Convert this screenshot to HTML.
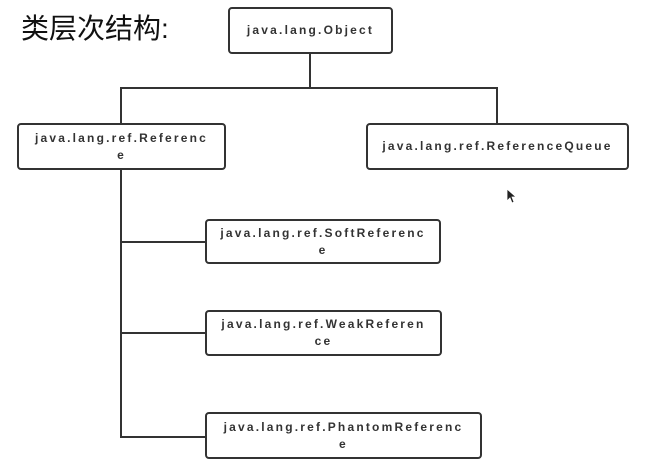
<!DOCTYPE html>
<html><head><meta charset="utf-8"><style>
html,body{margin:0;padding:0;background:#fff;}
body{width:656px;height:473px;position:relative;overflow:hidden;}
.t{position:absolute;left:21px;top:7px;font:28px "Liberation Sans","Noto Sans CJK SC",sans-serif;color:#111;}
.b{position:absolute;box-sizing:border-box;border:2px solid #333;border-radius:4px;background:#fff;
font:bold 12px "Liberation Sans",sans-serif;color:#333;letter-spacing:2.2px;text-align:center;line-height:17px;
display:flex;align-items:center;justify-content:center;white-space:nowrap;}
.b span{display:block;}
.l{position:absolute;background:#333;}
</style></head><body>
<div class="t">类层次结构:</div>
<div class="l" style="left:309px;top:52px;width:2px;height:37px"></div>
<div class="l" style="left:120px;top:87px;width:378px;height:2px"></div>
<div class="l" style="left:120px;top:87px;width:2px;height:38px"></div>
<div class="l" style="left:496px;top:87px;width:2px;height:38px"></div>
<div class="l" style="left:120px;top:168px;width:2px;height:270px"></div>
<div class="l" style="left:120px;top:241px;width:86px;height:2px"></div>
<div class="l" style="left:120px;top:332px;width:86px;height:2px"></div>
<div class="l" style="left:120px;top:436px;width:86px;height:2px"></div>
<div class="b" style="left:228px;top:7px;width:165px;height:47px">java.lang.Object</div>
<div class="b" style="left:17px;top:123px;width:209px;height:47px"><span>java.lang.ref.Referenc<br>e</span></div>
<div class="b" style="left:366px;top:123px;width:263px;height:47px">java.lang.ref.ReferenceQueue</div>
<div class="b" style="left:205px;top:219px;width:236px;height:45px"><span>java.lang.ref.SoftReferenc<br>e</span></div>
<div class="b" style="left:205px;top:310px;width:237px;height:46px"><span>java.lang.ref.WeakReferen<br>ce</span></div>
<div class="b" style="left:205px;top:412px;width:277px;height:47px"><span>java.lang.ref.PhantomReferenc<br>e</span></div>
<svg style="position:absolute;left:506px;top:188px" width="12" height="18" viewBox="0 0 12 18"><path d="M1 1 L1 13 L4 10 L6 15 L8 14 L6 9 L10 9 Z" fill="#222" stroke="#fff" stroke-width="0.8"/></svg>
</body></html>
